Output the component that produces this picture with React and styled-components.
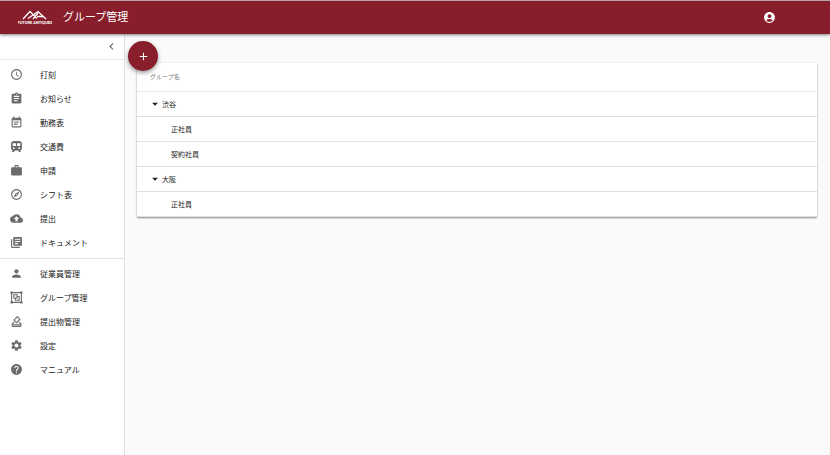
import { useState } from 'react';
import styled, { createGlobalStyle } from 'styled-components';
import {
  MdAccessTime,
  MdAccountCircle,
  MdAdd,
  MdArrowDropDown,
  MdAssignment,
  MdChevronLeft,
  MdCloudUpload,
  MdEventNote,
  MdHelp,
  MdLibraryBooks,
  MdOutlineExplore,
  MdOutlineHowToVote,
  MdPerson,
  MdSettings,
  MdWork,
} from 'react-icons/md';

const TrainIcon = () => (
  <svg viewBox='0 0 24 24' fill='currentColor' aria-hidden='true'>
    <path
      fillRule='evenodd'
      d='M8 2H16C20 2 22 3.500 22 7V15C22 17.500 20.500 19 18.500 19L20 20.500V22H17L14.500 19.500H9.500L7 22H4V20.500L5.500 19C3.500 19 2 17.500 2 15V7C2 3.500 4 2 8 2ZM5 6V11H11V6ZM13 6V11H19V6ZM7 13.500A1.600 1.600 0 1 0 7 16.700A1.600 1.600 0 1 0 7 13.500ZM17 13.500A1.600 1.600 0 1 0 17 16.700A1.600 1.600 0 1 0 17 13.500Z'
    />
  </svg>
);

const GroupIcon = () => (
  <svg viewBox='0 0 24 24' fill='currentColor' aria-hidden='true'>
    <path d='M1,1V5H2V19H1V23H5V22H19V23H23V19H22V5H23V1H19V2H5V1M5,4H19V5H20V19H19V20H5V19H4V5H5M6,6V14H9V18H18V9H14V6M8,8H12V12H8M14,11H16V16H11V14H14' />
  </svg>
);

const mainMenu = [
  { label: '打刻', icon: <MdAccessTime /> },
  { label: 'お知らせ', icon: <MdAssignment /> },
  { label: '勤務表', icon: <MdEventNote /> },
  { label: '交通費', icon: <TrainIcon /> },
  { label: '申請', icon: <MdWork /> },
  { label: 'シフト表', icon: <MdOutlineExplore /> },
  { label: '提出', icon: <MdCloudUpload /> },
  { label: 'ドキュメント', icon: <MdLibraryBooks /> },
];

const adminMenu = [
  { label: '従業員管理', icon: <MdPerson /> },
  { label: 'グループ管理', icon: <GroupIcon /> },
  { label: '提出物管理', icon: <MdOutlineHowToVote /> },
  { label: '設定', icon: <MdSettings /> },
  { label: 'マニュアル', icon: <MdHelp /> },
];

const groups = [
  { name: '渋谷', children: ['正社員', '契約社員'] },
  { name: '大阪', children: ['正社員'] },
];

const Menu = ({ items }) => (
  <MenuList>
    {items.map(({ label, icon }) => (
      <li key={label}>
        <MenuLink href='#'>
          {icon}
          <span>{label}</span>
        </MenuLink>
      </li>
    ))}
  </MenuList>
);

const App = () => {
  const [closed, setClosed] = useState([]);

  const toggle = (name) =>
    setClosed((prev) =>
      prev.includes(name) ? prev.filter((n) => n !== name) : [...prev, name]
    );

  return (
    <Page>
      <GlobalStyle />
      <Header>
        <Logo viewBox='0 0 34 16' role='img' aria-label='FUTURE ANTIQUES'>
          <path d='M5 10 12 2.500 19 9.500M10 9.500 20 2.500 28 10M15 10 20 4M19 7.500H25' />
          <text x='17' y='15' textAnchor='middle'>
            FUTURE ANTIQUES
          </text>
        </Logo>
        <Title>グループ管理</Title>
        <AccountButton aria-label='アカウント'>
          <MdAccountCircle />
        </AccountButton>
      </Header>
      <Body>
        <Sidebar>
          <SidebarTop>
            <CollapseButton aria-label='メニューを閉じる'>
              <MdChevronLeft />
            </CollapseButton>
          </SidebarTop>
          <Menu items={mainMenu} />
          <Divider />
          <Menu items={adminMenu} />
        </Sidebar>
        <Content>
          <Card>
            <AddButton aria-label='追加'>
              <MdAdd />
            </AddButton>
            <Table>
              <thead>
                <tr>
                  <HeadCell scope='col'>グループ名</HeadCell>
                </tr>
              </thead>
              {groups.map(({ name, children }) => {
                const open = !closed.includes(name);
                return (
                  <tbody key={name}>
                    <tr>
                      <Cell>
                        <ToggleButton
                          $open={open}
                          aria-expanded={open}
                          onClick={() => toggle(name)}
                        >
                          <MdArrowDropDown />
                          {name}
                        </ToggleButton>
                      </Cell>
                    </tr>
                    {open &&
                      children.map((child) => (
                        <tr key={child}>
                          <Cell $nested>{child}</Cell>
                        </tr>
                      ))}
                  </tbody>
                );
              })}
            </Table>
          </Card>
        </Content>
      </Body>
    </Page>
  );
};

const GlobalStyle = createGlobalStyle`
  * {
    box-sizing: border-box;
  }
  body {
    margin: 0;
    background: #fafafa;
    color: #212121;
    font-family: Roboto, 'Noto Sans CJK JP', sans-serif;
    font-size: 8px;
  }
  button {
    border: 0;
    padding: 0;
    background: none;
    color: inherit;
    font: inherit;
    cursor: pointer;
  }
`;

const Page = styled.div`
  display: flex;
  flex-direction: column;
  min-height: 100vh;
`;

const Header = styled.header`
  position: relative;
  z-index: 1;
  display: flex;
  align-items: center;
  height: 34px;
  padding: 0 54px 0 18px;
  border-top: 1px solid #b5a5a8;
  background: #881e2c;
  color: #ffffff;
  box-shadow: 0 1px 3px rgba(0, 0, 0, 0.5);
`;

const Logo = styled.svg`
  width: 34px;
  height: 16px;
  margin-right: 11px;
  margin-bottom: 2px;
  path {
    fill: none;
    stroke: currentColor;
    stroke-width: 1.3;
  }
  text {
    fill: currentColor;
    font-size: 4px;
    font-weight: 700;
  }
`;

const Title = styled.h1`
  flex: 1;
  margin: 0;
  font-size: 11px;
  font-weight: 400;
  line-height: 16px;
`;

const AccountButton = styled.button`
  display: flex;
  font-size: 13px;
`;

const Body = styled.div`
  display: flex;
  flex: 1;
`;

const Sidebar = styled.nav`
  flex: none;
  width: 125px;
  border-right: 1px solid #e0e0e0;
  background: #ffffff;
`;

const SidebarTop = styled.div`
  display: flex;
  align-items: center;
  justify-content: flex-end;
  height: 26px;
  padding-right: 6px;
  border-bottom: 1px solid #e8e8e8;
`;

const CollapseButton = styled.button`
  display: flex;
  color: #616161;
  font-size: 13px;
`;

const MenuList = styled.ul`
  margin: 0;
  padding: 2px 0 4px;
  list-style: none;
`;

const MenuLink = styled.a`
  display: flex;
  align-items: center;
  gap: 17px;
  height: 24px;
  padding-left: 10px;
  color: #212121;
  text-decoration: none;
  svg {
    width: 13px;
    height: 13px;
    color: #6b6b6b;
  }
`;

const Divider = styled.hr`
  margin: 0;
  border: 0;
  border-top: 1px solid #e0e0e0;
`;

const Content = styled.main`
  flex: 1;
  padding: 29px 13px 16px 12px;
`;

const Card = styled.section`
  position: relative;
  border-radius: 1px;
  background: #ffffff;
  box-shadow: 0 1px 2px rgba(0, 0, 0, 0.45);
`;

const AddButton = styled.button`
  position: absolute;
  top: -22px;
  left: -9px;
  display: flex;
  align-items: center;
  justify-content: center;
  width: 30px;
  height: 30px;
  border-radius: 50%;
  background: #881e2c;
  color: #ffffff;
  font-size: 13px;
  box-shadow: 0 2px 4px rgba(0, 0, 0, 0.4);
`;

const Table = styled.table`
  width: 100%;
  border-spacing: 0;
  font-size: 7px;
`;

const HeadCell = styled.th`
  height: 29px;
  padding: 0 13px 2px;
  border-bottom: 1px solid #ebebeb;
  color: #757575;
  font-size: 6px;
  font-weight: 400;
  text-align: left;
`;

const Cell = styled.td`
  height: 25px;
  padding: 0 13px 1px ${({ $nested }) => ($nested ? '34px' : '11px')};
  border-bottom: 1px solid #e0e0e0;
`;

const ToggleButton = styled.button`
  display: flex;
  align-items: center;
  svg {
    width: 14px;
    height: 14px;
    transform: ${({ $open }) => ($open ? 'none' : 'rotate(-90deg)')};
  }
`;

export default App;
